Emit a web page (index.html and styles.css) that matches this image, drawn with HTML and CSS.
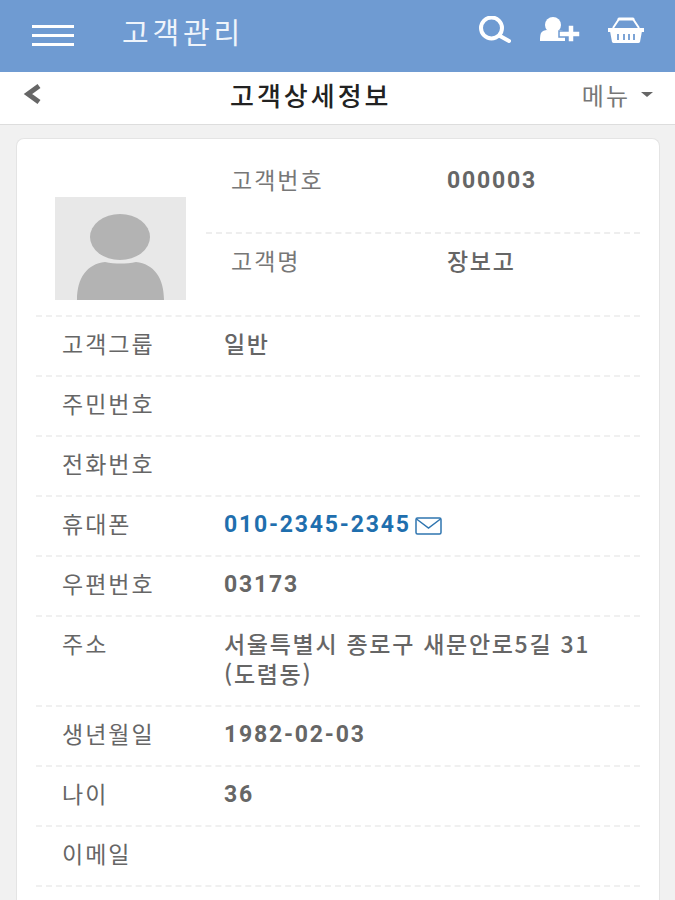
FILE: index.html
```html
<!DOCTYPE html>
<html lang="ko">
<head>
    <meta charset="UTF-8">
    <meta name="viewport" content="width=device-width, initial-scale=1.0">
    <title>고객상세정보</title>
    <link rel="stylesheet" href="styles.css">
</head>
<body>
    <header class="top-bar">
        <div class="hamburger"><span></span><span></span><span></span></div>
        <h1 class="top-title">고객관리</h1>
        <div class="top-icons">
            <svg width="34" height="30" viewBox="0 0 34 30" fill="none" stroke="#fff">
                <circle cx="14.500" cy="12" r="10.500" stroke-width="4"/>
                <path d="M23 20l9 5" stroke-width="4" stroke-linecap="round"/>
            </svg>
            <svg width="42" height="30" viewBox="0 0 42 30" fill="#fff">
                <ellipse cx="15" cy="9" rx="8" ry="8"/>
                <path d="M2 25c0-1 0-6 1-8 1-2 4-3 6-3 3 2 9 2 12 0 3 0 5 1 6 3v8z"/>
                <path d="M30 9h6v6h6v6h-6v5h-6v-5H21v-6h9z" stroke="#6f9bd2" stroke-width="1.500"/>
            </svg>
            <svg width="38" height="30" viewBox="0 0 38 30" fill="none" stroke="#fff">
                <path d="M6 12l6-9h14l6 9" stroke-width="2"/>
                <path d="M12 3h14" stroke-width="3" stroke-linecap="round"/>
                <path d="M1 12h36v4H1z" fill="#fff" stroke="none"/>
                <path d="M3 15h32l-2 11a2 2 0 0 1-2 1H7a2 2 0 0 1-2-1z" fill="#fff" stroke="none"/>
                <path d="M11 18v6M17 18v6M22 18v6M27 18v6" stroke="#6f9bd2" stroke-width="1.800"/>
            </svg>
        </div>
    </header>

    <nav class="sub-bar">
        <svg class="back" width="20" height="22" viewBox="0 0 20 22" fill="none" stroke="#666" stroke-width="5">
            <path d="M17 3L6 11l11 8"/>
        </svg>
        <h2 class="sub-title">고객상세정보</h2>
        <div class="sub-menu">메뉴 <span class="caret"></span></div>
    </nav>

    <main class="content">
        <section class="card">
            <div class="profile">
                <div class="photo">
                    <svg width="131" height="103" viewBox="0 0 131 103" fill="#b3b3b3">
                        <ellipse cx="65" cy="40" rx="30" ry="23"/>
                        <path d="M22 103c0-22 10-36 28-38 10 2 21 2 31 0 18 2 28 16 28 38z"/>
                    </svg>
                </div>
                <div class="profile-rows">
                    <div class="profile-row">
                        <span class="profile-label">고객번호</span>
                        <span class="value">000003</span>
                    </div>
                    <div class="profile-row">
                        <span class="profile-label">고객명</span>
                        <span class="value ko">장보고</span>
                    </div>
                </div>
            </div>
            <div class="row"><span class="label">고객그룹</span><span class="value ko">일반</span></div>
            <div class="row"><span class="label">주민번호</span></div>
            <div class="row"><span class="label">전화번호</span></div>
            <div class="row">
                <span class="label">휴대폰</span>
                <span class="value phone">010-2345-2345<svg width="29" height="18" viewBox="0 0 28 18" fill="none" stroke="#2f75b0" stroke-width="1.500">
                        <rect x="1.500" y="1" width="25" height="16" rx="1.500"/>
                        <path d="M2 2l12 9 12-9"/>
                    </svg></span>
            </div>
            <div class="row"><span class="label">우편번호</span><span class="value">03173</span></div>
            <div class="row"><span class="label">주소</span><span class="value ko">서울특별시 종로구 새문안로5길 31<br>(도렴동)</span></div>
            <div class="row"><span class="label">생년월일</span><span class="value">1982-02-03</span></div>
            <div class="row"><span class="label">나이</span><span class="value">36</span></div>
            <div class="row"><span class="label">이메일</span></div>
        </section>
    </main>
</body>
</html>
```

FILE: styles.css
```css
body {
    margin: 0;
    background: #f1f1f1;
    font-family: "Noto Sans CJK KR", Roboto, sans-serif;
    color: #666;
}

.top-bar {
    height: 72px;
    background: #6f9bd2;
    display: flex;
    align-items: center;
    padding: 0 30px 10px 32px;
    box-sizing: border-box;
}

.hamburger {
    width: 42px;
    display: flex;
    flex-direction: column;
    gap: 6px;
    margin-top: 8px;
}

.hamburger span {
    height: 3px;
    background: #fff;
}

.top-title {
    margin: 0 0 0 48px;
    font-size: 29px;
    font-weight: 400;
    letter-spacing: 3.800px;
    line-height: 32px;
    color: #eef4fb;
}

.top-icons {
    margin-left: auto;
    display: flex;
    align-items: center;
    gap: 27px;
}

.sub-bar {
    height: 53px;
    background: #fff;
    border-bottom: 1px solid #ddd;
    box-sizing: border-box;
    display: flex;
    align-items: center;
    padding: 0 22px 8px 22px;
}

.sub-title {
    margin: 0 0 0 188px;
    font-size: 26px;
    font-weight: 500;
    letter-spacing: 3px;
    color: #222;
}

.sub-menu {
    margin-left: auto;
    font-size: 24px;
    letter-spacing: 2px;
    color: #777;
    display: flex;
    align-items: center;
    gap: 11px;
}

.caret {
    width: 0;
    height: 0;
    border-left: 6px solid transparent;
    border-right: 6px solid transparent;
    border-top: 5px solid #666;
}

.content {
    height: 775px;
    box-sizing: border-box;
    padding: 13px 15px 0 16px;
    display: flex;
}

.card {
    flex: 1;
    background: #fff;
    border: 1px solid #e4e4e4;
    border-bottom: none;
    border-radius: 8px 8px 0 0;
    padding: 0 19px;
}

.profile {
    display: flex;
    align-items: flex-end;
    height: 178px;
    border-bottom: 2px dashed #f0f0f0;
    box-sizing: border-box;
}

.photo {
    width: 131px;
    height: 103px;
    margin: 0 20px 15px 19px;
    background: #e8e8e8;
    flex-shrink: 0;
}

.photo svg {
    display: block;
}

.profile-rows {
    flex: 1;
    align-self: stretch;
    display: flex;
    flex-direction: column;
}

.profile-row {
    display: flex;
    align-items: flex-start;
    padding-left: 25px;
    box-sizing: border-box;
    line-height: 30px;
}

.profile-row:first-child {
    height: 95px;
    padding-top: 25px;
    border-bottom: 2px dashed #eee;
}

.profile-row:last-child {
    height: 81px;
    padding-top: 11px;
}

.profile-label {
    width: 216px;
    font-size: 23px;
    letter-spacing: 2px;
    color: #777;
}

.row {
    display: flex;
    align-items: flex-start;
    border-bottom: 2px dashed #f0f0f0;
    padding: 11px 0 17px;
    min-height: 30px;
    line-height: 30px;
}

.label {
    width: 188px;
    padding-left: 26px;
    box-sizing: border-box;
    flex-shrink: 0;
    font-size: 23px;
    letter-spacing: 2px;
    color: #666;
}

.value {
    flex: 1;
    padding-top: 2px;
    margin-bottom: -2px;
    font-family: Roboto, "Noto Sans CJK KR", sans-serif;
    font-size: 23px;
    font-weight: 700;
    letter-spacing: 1.800px;
    color: #666;
}

.ko {
    padding-top: 0;
    margin-bottom: 0;
    font-family: "Noto Sans CJK KR", Roboto, sans-serif;
    font-weight: 500;
    letter-spacing: 1.700px;
}

.phone {
    color: #1f6fae;
}

.phone svg {
    margin-left: 3px;
    vertical-align: -3px;
}
```
